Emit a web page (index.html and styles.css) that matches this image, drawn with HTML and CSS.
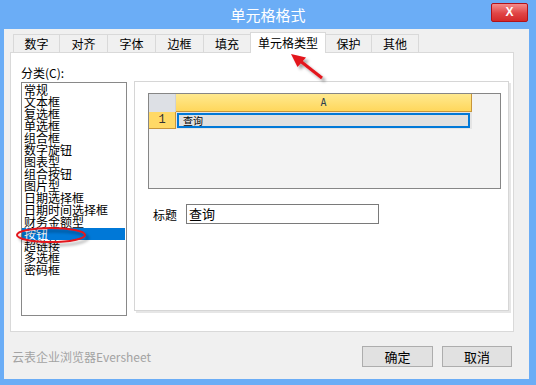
FILE: index.html
```html
<!DOCTYPE html>
<html lang="zh-CN">
<head>
  <meta charset="UTF-8" />
  <title>单元格格式</title>
  <link rel="stylesheet" href="styles.css">
</head>
<body>
  <div class="window">
    <div class="titlebar">
      <span></span>
      <span class="title">单元格格式</span>
      <span class="close">X</span>
    </div>

    <div class="client">
      <div class="tabs">
        <div class="tab first" style="width:47px">数字</div>
        <div class="tab" style="width:48px">对齐</div>
        <div class="tab" style="width:48px">字体</div>
        <div class="tab" style="width:48px">边框</div>
        <div class="tab" style="width:47px">填充</div>
        <div class="tab active" style="width:76px">单元格类型</div>
        <div class="tab" style="width:46px">保护</div>
        <div class="tab" style="width:47px">其他</div>
      </div>

      <div class="panel">
        <div class="left">
          <div class="caption">分类(C):</div>
          <div class="list">
            <div class="item">常规</div>
            <div class="item">文本框</div>
            <div class="item">复选框</div>
            <div class="item">单选框</div>
            <div class="item">组合框</div>
            <div class="item">数字旋钮</div>
            <div class="item">图表型</div>
            <div class="item">组合按钮</div>
            <div class="item">图片型</div>
            <div class="item">日期选择框</div>
            <div class="item">日期时间选择框</div>
            <div class="item">财务金额型</div>
            <div class="item selected">按钮</div>
            <div class="item">超链接</div>
            <div class="item">多选框</div>
            <div class="item">密码框</div>
          </div>
        </div>

        <div class="group">
          <div class="sheet">
            <div class="corner"></div>
            <div class="colhead">A</div>
            <div class="rowhead">1</div>
            <div class="cell"><span class="cellbox">查询</span></div>
          </div>
          <div class="field">
            <span class="field-label">标题</span>
            <span class="input">查询</span>
          </div>
        </div>
      </div>

      <div class="footer">
        <span class="brand">云表企业浏览器Eversheet</span>
        <div class="buttons">
          <span class="btn ok">确定</span>
          <span class="btn">取消</span>
        </div>
      </div>
    </div>

    <svg class="marks" width="536" height="385" viewBox="0 0 536 385">
      <defs>
        <filter id="shadow" x="-30%" y="-30%" width="160%" height="160%">
          <feDropShadow dx="3" dy="3" stdDeviation="1.6" flood-color="#000" flood-opacity="0.35"/>
        </filter>
      </defs>
      <g filter="url(#shadow)">
        <ellipse cx="51" cy="235" rx="34" ry="7" fill="none" stroke="#e3141c" stroke-width="2"/>
        <line x1="299" y1="60" x2="322" y2="78" stroke="#e3141c" stroke-width="3"/>
        <polygon points="291,54 297.5,67 306,57.5" fill="#e3141c"/>
      </g>
    </svg>
  </div>
</body>
</html>
```

FILE: styles.css
```css
body { margin: 0; font-family: "Noto Sans CJK SC", "Liberation Sans", sans-serif; font-size: 12px; color: #000; }

.window { position: relative; width: 536px; height: 385px; background: #6badf6; overflow: hidden; }

.titlebar { height: 29px; display: grid; grid-template-columns: 1fr auto 1fr; }
.title { color: #fff; font-size: 15px; line-height: 29px; }
.close { justify-self: end; margin: 3px 8px 0 0; width: 35px; height: 17px; border: 1px solid #b0121a; border-radius: 2px;
  background: linear-gradient(#f48b8b, #e04545 55%, #d42a2a); color: #fff; font: bold 12px/17px "Liberation Sans", sans-serif; text-align: center; }

.client { margin-left: 4px; width: 525px; height: 350px; background: #f0f0f0; }

.tabs { height: 23px; margin-left: 9px; display: flex; align-items: flex-end; }
.tab { box-sizing: border-box; height: 18px; border: 1px solid #d9d9d9; border-left: none; border-bottom: none;
  background: #f0f0f0; text-align: center; line-height: 17px; font-size: 12px; }
.tab.first { border-left: 1px solid #d9d9d9; }
.tab.active { height: 21px; margin-left: -1px; margin-bottom: -1px; border-left: 1px solid #d9d9d9; background: #fff; position: relative; line-height: 19px; }

.panel { box-sizing: border-box; margin-left: 6px; width: 504px; height: 280px; background: #fff; border: 1px solid #d9d9d9;
  padding: 13px 0 0 10px; display: flex; gap: 7px; align-items: flex-start; }

.caption { line-height: 14px; }
.list { box-sizing: border-box; margin-top: 2px; width: 106px; height: 234px; border: 1px solid #898989; padding: 1px 0; }
.item { line-height: 12px; height: 12px; padding-left: 2px; margin-right: 1px; white-space: nowrap; }
.item.selected { background: #0078d7; color: #fff; }

.group { box-sizing: border-box; margin-top: 15px; width: 375px; height: 230px; border: 1px solid #d6d6d6;
  box-shadow: 2px 2px 0 #e6e6e6; padding: 11px 0 0 13px; }

.sheet { box-sizing: border-box; width: 353px; height: 96px; border: 1px solid #868686; background: #f3f3f3;
  display: grid; grid-template-columns: 27px 296px; grid-template-rows: 18px 17px; }
.corner { background: #dde0e5; border-right: 1px solid #cfd2d6; }
.colhead { background: linear-gradient(#ffe98f, #ffd75c); border-right: 1px solid #c8963a; border-bottom: 1px solid #c8963a;
  text-align: center; font: 10px/18px "DejaVu Sans Mono", monospace; color: #2c3e50; }
.rowhead { background: #ffd966; border-right: 1px solid #c8963a; border-bottom: 1px solid #c8963a;
  text-align: center; font: 12px/16px "Liberation Mono", monospace; color: #333; }
.cell { background: #e4e4e4; padding: 1px 2px 1px 1px; }
.cellbox { display: block; box-sizing: border-box; height: 15px; border: 2px solid #0078d7; background: #e0e0e0;
  font-size: 10px; line-height: 11px; padding-left: 4px; }

.field { margin-top: 15px; display: flex; align-items: center; gap: 9px; padding-left: 5px; }
.field-label { width: 24px; }
.input { box-sizing: border-box; width: 193px; height: 20px; border: 1px solid #7a7a7a; font-size: 13px; line-height: 18px; padding-left: 2px; }

.footer { display: flex; justify-content: space-between; align-items: center; padding: 14px 17px 0 8px; }
.brand { color: #a3a3a3; font-size: 12px; }
.buttons { display: flex; gap: 9px; }
.btn { box-sizing: border-box; width: 70px; height: 21px; border: 1px solid #adadad; background: #e1e1e1; text-align: center; font-size: 13px; line-height: 19px; }
.btn.ok { width: 71px; }

.marks { position: absolute; left: 0; top: 0; pointer-events: none; }
```
